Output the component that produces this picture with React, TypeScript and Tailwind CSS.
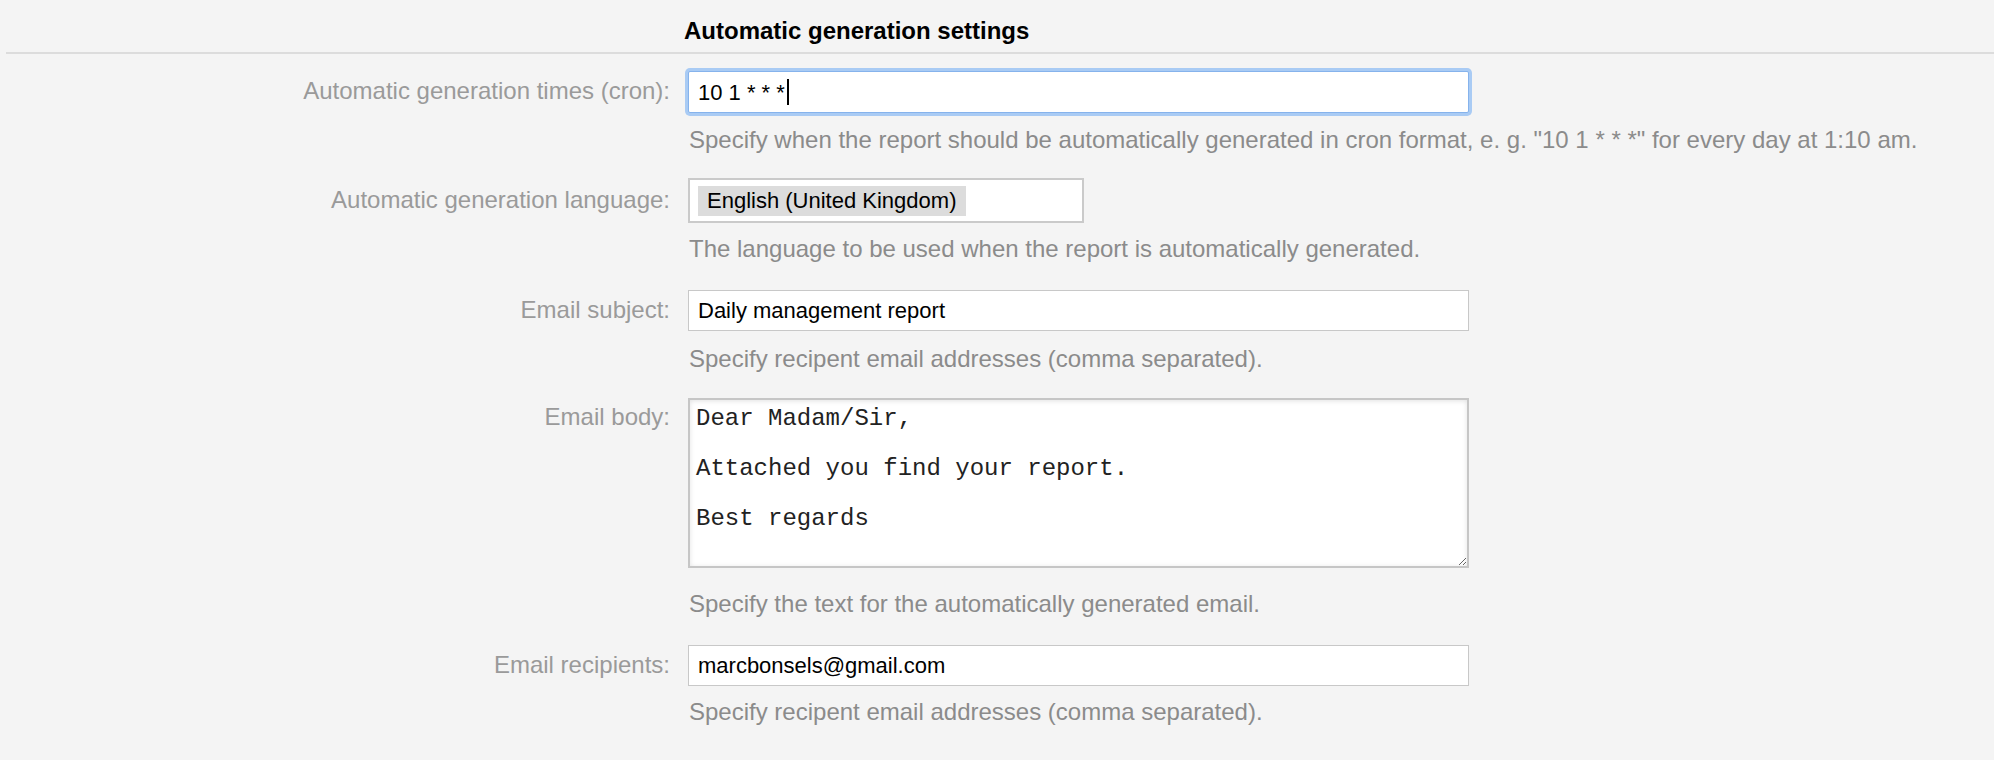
import React from "react";

const sans = "font-['Liberation_Sans',Arial,sans-serif]";

function Label({ text, pt }: { text: string; pt: string }) {
  return (
    <div className={`text-right text-[24px] leading-[28px] text-[#9a9a9a] ${pt}`}>{text}</div>
  );
}

function Help({ text, mt }: { text: string; mt: string }) {
  return (
    <p className={`whitespace-nowrap text-[24px] leading-[28px] text-[#8b8b8b] pl-[1px] ${mt}`}>{text}</p>
  );
}

export default function App() {
  return (
    <div className={`min-h-[760px] bg-[#f4f4f4] ${sans}`}>
      {/* Section header */}
      <div className="ml-[6px] border-b-2 border-[#dcdcdc] pt-[17px] pb-[7px]">
        <h2 className="pl-[678px] text-[24px] leading-[28px] font-bold text-black">
          Automatic generation settings
        </h2>
      </div>

      <div className="grid grid-cols-[670px_1fr] gap-x-[18px]">
        {/* Cron */}
        <Label text="Automatic generation times (cron):" pt="mt-[17px] pt-[6px]" />
        <div className="mt-[17px]">
          <div className="flex h-[42px] w-[781px] items-center rounded-[2px] border border-[#86b3ec] bg-white px-[9px] shadow-[0_0_0_3px_#a9cbf4] text-[22px] text-black">
            <span>10 1 * * *</span>
            <span className="ml-[2px] inline-block h-[26px] w-[2px] bg-black" />
          </div>
          <Help
            mt="mt-[13px]"
            text={'Specify when the report should be automatically generated in cron format, e. g. "10 1 * * *" for every day at 1:10 am.'}
          />
        </div>

        {/* Language */}
        <Label text="Automatic generation language:" pt="mt-[24px] pt-[8px]" />
        <div className="mt-[24px]">
          <div className="h-[45px] w-[396px] border-2 border-[#cacaca] bg-white pl-[8px] pt-[6px]">
            <span className="inline-block h-[30px] bg-[#dcdcdc] pl-[9px] pr-[10px] text-[22px] leading-[30px] text-black">
              English (United Kingdom)
            </span>
          </div>
          <Help mt="mt-[12px]" text="The language to be used when the report is automatically generated." />
        </div>

        {/* Subject */}
        <Label text="Email subject:" pt="mt-[27px] pt-[6px]" />
        <div className="mt-[27px]">
          <input
            defaultValue="Daily management report"
            className="block h-[41px] w-[781px] border border-[#c8c8c8] bg-white px-[9px] text-[22px] text-black outline-none"
          />
          <Help mt="mt-[14px]" text="Specify recipent email addresses (comma separated)." />
        </div>

        {/* Body */}
        <Label text="Email body:" pt="mt-[25px] pt-[5px]" />
        <div className="mt-[25px]">
          <textarea
            defaultValue={"Dear Madam/Sir,\n\nAttached you find your report.\n\nBest regards"}
            className="block h-[170px] w-[781px] border-2 border-[#c6c6c6] bg-white px-[6px] pt-[6px] font-['Liberation_Mono','Courier_New',monospace] text-[24px] leading-[25px] text-[#222] shadow-[inset_0_1px_5px_rgba(0,0,0,0.12)] outline-none"
          />
          <Help mt="mt-[22px]" text="Specify the text for the automatically generated email." />
        </div>

        {/* Recipients */}
        <Label text="Email recipients:" pt="mt-[27px] pt-[6px]" />
        <div className="mt-[27px]">
          <input
            defaultValue="marcbonsels@gmail.com"
            className="block h-[41px] w-[781px] border border-[#c8c8c8] bg-white px-[9px] text-[22px] text-black outline-none"
          />
          <Help mt="mt-[12px]" text="Specify recipent email addresses (comma separated)." />
        </div>
      </div>
    </div>
  );
}
